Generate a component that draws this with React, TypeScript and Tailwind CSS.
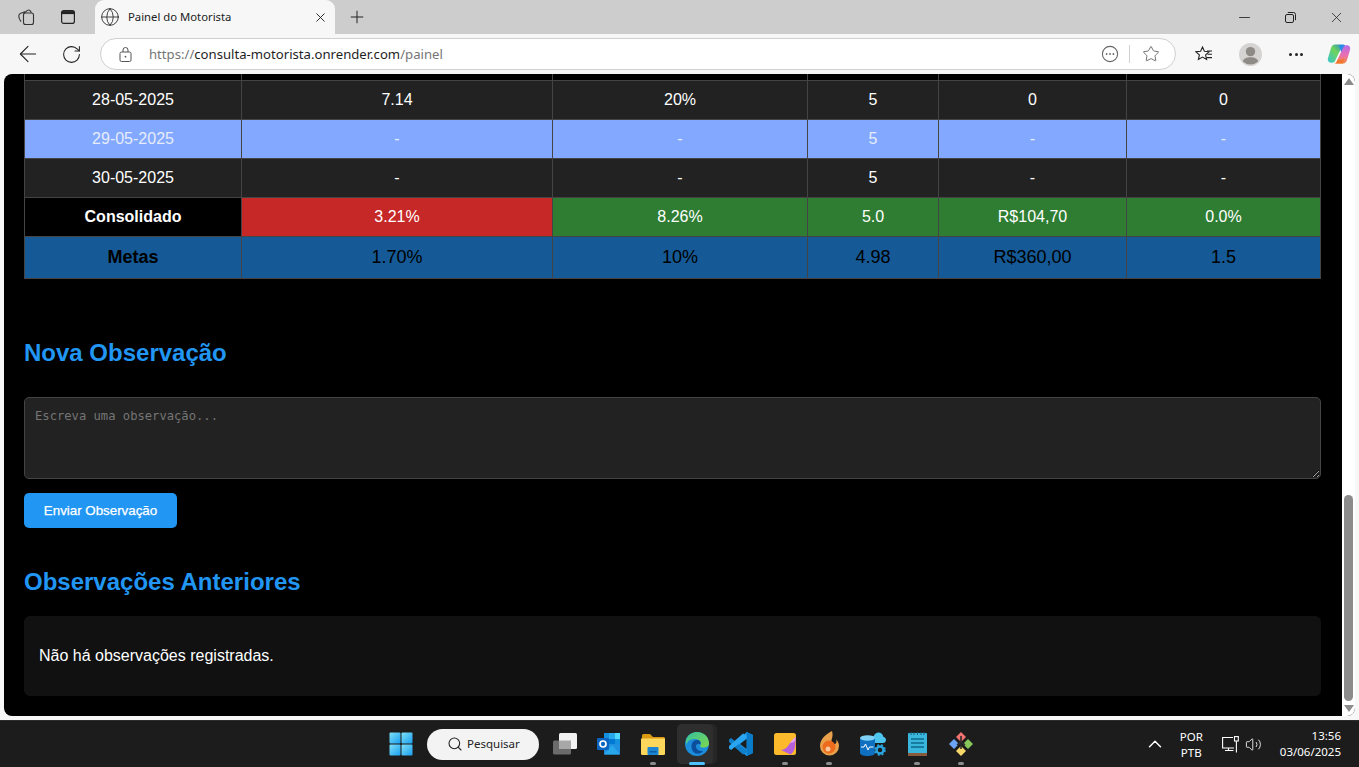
import React from 'react';
import { ArrowLeft, RotateCw, Plus, X, Minus, Globe, Star, Search, ChevronUp, Volume2 } from 'lucide-react';

const rows = [
  { date: '28-05-2025', cells: ['7.14', '20%', '5', '0', '0'], highlight: false },
  { date: '29-05-2025', cells: ['-', '-', '5', '-', '-'], highlight: true },
  { date: '30-05-2025', cells: ['-', '-', '5', '-', '-'], highlight: false },
];

const consolidado = [
  { value: '3.21%', bg: 'bg-[#c62828]' },
  { value: '8.26%', bg: 'bg-[#2e7d32]' },
  { value: '5.0', bg: 'bg-[#2e7d32]' },
  { value: 'R$104,70', bg: 'bg-[#2e7d32]' },
  { value: '0.0%', bg: 'bg-[#2e7d32]' },
];

const metas = ['1.70%', '10%', '4.98', 'R$360,00', '1.5'];

const WorkspacesIcon = () => (
  <svg width="18" height="18" viewBox="0 0 18 18" fill="none" stroke="#333" strokeWidth="1.1">
    <rect x="6.5" y="5" width="10" height="11.5" rx="2" />
    <path d="M4.2 13.5 3.6 13c-1.4-1.8-2-4-1.8-5.5.2-1.3 1-2 2-2.3L8 3.8" />
    <path d="M6.5 5.5 10.5 2.4c.8-.5 1.7-.5 2.4 0l1.6 2.4" />
  </svg>
);

const TabsIcon = () => (
  <svg width="16" height="16" viewBox="0 0 16 16" fill="none" stroke="#222" strokeWidth="1.2">
    <rect x="1.6" y="1.6" width="12.8" height="12.8" rx="2.2" />
    <path d="M1.6 3.6h12.8" strokeWidth="3" />
  </svg>
);

const RestoreIcon = () => (
  <svg width="11" height="11" viewBox="0 0 11 11" fill="none" stroke="#222" strokeWidth="1">
    <rect x="0.5" y="2.5" width="8" height="8" rx="1.5" />
    <path d="M2.8 0.5h5.7a2 2 0 0 1 2 2v5.7" />
  </svg>
);

const LockIcon = () => (
  <svg width="13" height="15" viewBox="0 0 13 15" fill="none" stroke="#555" strokeWidth="1">
    <rect x="1" y="5" width="11" height="9.5" rx="1.5" />
    <path d="M4 5V3a2.500 2.500 0 0 1 5 0v2" />
    <circle cx="6.500" cy="9.700" r="0.900" fill="#555" stroke="none" />
  </svg>
);

const PageInfoIcon = () => (
  <svg width="18" height="18" viewBox="0 0 18 18" fill="none" stroke="#666" strokeWidth="1.1">
    <circle cx="9" cy="9" r="7.6" />
    <circle cx="5.6" cy="9" r="0.9" fill="#666" stroke="none" />
    <circle cx="9" cy="9" r="0.9" fill="#666" stroke="none" />
    <circle cx="12.4" cy="9" r="0.9" fill="#666" stroke="none" />
  </svg>
);

const FavoritesIcon = () => (
  <svg width="18" height="18" viewBox="0 0 18 18" fill="none" stroke="#222" strokeWidth="1.1">
    <path d="M7.500 2l1.900 4.300 4.600.5-3.400 3.100 1 4.600-4.100-2.400-4.100 2.400 1-4.600L1 6.800l4.600-.5z" />
    <path d="M12 6h5M12.500 9.300h4.500M11.800 12.600h5.200" />
  </svg>
);

const Avatar = () => (
  <svg width="23" height="23" viewBox="0 0 23 23">
    <circle cx="11.5" cy="11.5" r="11.5" fill="#d6d4d2" />
    <circle cx="11.5" cy="8.6" r="4.7" fill="#8e8a86" />
    <path d="M3.8 18.5c1-3.2 3.8-4.2 7.7-4.2s6.7 1 7.7 4.2a11.5 11.5 0 0 1-15.4 0z" fill="#8e8a86" />
  </svg>
);

const CopilotLogo = () => (
  <svg width="24" height="24" viewBox="0 0 24 24">
    <defs>
      <linearGradient id="cpA" x1="0" y1="1" x2="1" y2="0">
        <stop offset="0" stopColor="#37c6d0" />
        <stop offset="0.55" stopColor="#6fd35a" />
        <stop offset="1" stopColor="#1b7fe0" />
      </linearGradient>
      <linearGradient id="cpB" x1="0.500" y1="0" x2="0.500" y2="1">
        <stop offset="0" stopColor="#b66be8" />
        <stop offset="0.55" stopColor="#ea6fb0" />
        <stop offset="1" stopColor="#f58a3c" />
      </linearGradient>
    </defs>
    <path d="M8 2.500h9.500c-1.800.500-3 1.500-3.800 4.500L8.500 18c-.5 1.800-1.800 2.700-3.500 2.700H4c-2.500 0-3.700-2.200-3-4.700L4 6c.5-1.800 2-3.500 4-3.500z" fill="url(#cpA)" />
    <path d="M12 3h6l1 6-5 1z" fill="#2b8be8" />
    <path d="M16 21.500H7c1.800-.5 3-1.500 3.800-4.500L16 6c.5-1.800 1.800-2.700 3.500-2.700h.5c2.500 0 3.700 2.200 3 4.700l-3 10c-.5 1.800-2 3.500-4 3.500z" fill="url(#cpB)" />
    <path d="M10.500 17.500c1 .5 4 .5 6.500-1l-1 5h-7z" fill="#f2762e" />
  </svg>
);

const StartIcon = () => (
  <svg width="24" height="24" viewBox="0 0 24 24">
    <defs>
      <linearGradient id="win" x1="0" y1="0" x2="1" y2="1">
        <stop offset="0" stopColor="#7fe0f7" />
        <stop offset="1" stopColor="#1a9ff0" />
      </linearGradient>
    </defs>
    <rect x="0.500" y="0.500" width="11" height="11" rx="1" fill="url(#win)" />
    <rect x="12.500" y="0.500" width="11" height="11" rx="1" fill="url(#win)" />
    <rect x="0.500" y="12.500" width="11" height="11" rx="1" fill="url(#win)" />
    <rect x="12.500" y="12.500" width="11" height="11" rx="1" fill="url(#win)" />
  </svg>
);

const TaskViewIcon = () => (
  <svg width="24" height="22" viewBox="0 0 24 22">
    <rect x="0" y="7.500" width="18" height="14" rx="1.500" fill="#6b6b6b" />
    <rect x="6" y="0" width="18" height="16" rx="1.500" fill="#f2f2f2" />
    <rect x="6" y="7.500" width="12" height="8.500" fill="#a8a8a8" />
  </svg>
);

const OutlookIcon = () => (
  <svg width="24" height="24" viewBox="0 0 24 24">
    <rect x="7" y="1" width="16" height="12" fill="#1490df" />
    <rect x="12" y="1" width="6" height="6" fill="#28a8ea" />
    <rect x="18" y="1" width="5" height="6" fill="#50d9ff" />
    <rect x="12" y="7" width="6" height="6" fill="#0078d4" />
    <path d="M7 12 23 12v9.500a1 1 0 0 1-1 1H8a1 1 0 0 1-1-1z" fill="#1f90e0" />
    <path d="M7 22.500 15 13l8 9.500z" fill="#28a8ea" />
    <rect x="0" y="6" width="12" height="12" rx="1" fill="#0a64c0" />
    <circle cx="6" cy="12" r="3" fill="none" stroke="#fff" strokeWidth="1.700" />
  </svg>
);

const FolderIcon = () => (
  <svg width="24" height="22" viewBox="0 0 24 22">
    <path d="M1 2.500A1.500 1.500 0 0 1 2.500 1H9l3 3h10.500A1.500 1.500 0 0 1 24 5.500V8H1z" fill="#d99a12" />
    <path d="M0 5.500h24V20.500a1.500 1.500 0 0 1-1.500 1.500h-21A1.500 1.500 0 0 1 0 20.500z" fill="#fdd65c" />
    <rect x="6.500" y="14" width="11" height="8" rx="1" fill="#1a86d4" />
    <rect x="8.500" y="18" width="7" height="1.500" fill="#0f5fa0" />
  </svg>
);

const EdgeIcon = () => (
  <svg width="24" height="24" viewBox="0 0 24 24">
    <defs>
      <linearGradient id="edgeA" x1="0" y1="0" x2="1" y2="1">
        <stop offset="0" stopColor="#35c1a0" />
        <stop offset="1" stopColor="#7fd94a" />
      </linearGradient>
    </defs>
    <circle cx="12" cy="12" r="12" fill="#1b8ddb" />
    <path d="M1 8C3 2 8 0 12 0c7 0 12 5 12 11.500 0 2.500-2.500 4-5.500 4-2 0-3.500-.5-3.500-1.500 2-2.500 0-7-5-7C6 7 2.500 8.500 1 13z" fill="url(#edgeA)" />
    <path d="M6.500 14c0-3.500 2.500-6 5.500-6s4 2 3.500 4.500c-2-1.500-4.500-.5-4.500 2s3 5 7 4.500c-2 3-7 4-10 .5-1-1.500-1.500-3.500-1.500-5.500z" fill="#0c4e9c" />
  </svg>
);

const VsCodeIcon = () => (
  <svg width="24" height="24" viewBox="0 0 24 24">
    <path d="M17.500 0 24 3v18l-6.500 3L6 13.500z" fill="#1f9cf0" />
    <path d="M17.500 0 17.500 24 24 21V3z" fill="#0a7bc8" />
    <path d="M0 7.500 2 6l15.500 12v2.500L14 22.500 0 10z" fill="#0f7fcb" />
    <path d="M0 16.500 2 18 17.500 6V3.500L14 1.500 0 14z" fill="#2aa5f2" />
    <path d="M17.500 7 11 12l6.500 5z" fill="#1c1c1c" />
  </svg>
);

const NotesIcon = () => (
  <svg width="22" height="22" viewBox="0 0 22 22">
    <rect x="0" y="0" width="22" height="22" rx="2.500" fill="#fcb92b" />
    <path d="M22 4 21 14c-.3 3-2 5.500-4.500 7.500L7 17c3-.5 6-1.500 9-7z" fill="#b55fdc" />
    <path d="M16 10c2-3 4-5 6-6-.5 3-1.500 6-6 6z" fill="#e3a6f0" />
  </svg>
);

const FlameIcon = () => (
  <svg width="22" height="26" viewBox="0 0 22 26">
    <path d="M14 0c-6 3-12 8-12 15a9.500 9.500 0 0 0 19 0c0-2.500-1-5-3-6.500 1 2 .5 4-1 4.500-2 .5-4-1-3.500-4C14.700 6 15 3 14 0z" fill="#e8a04a" />
    <circle cx="11" cy="16" r="6.500" fill="#ee6a1c" />
    <circle cx="10" cy="18" r="2.500" fill="#f9c79a" />
  </svg>
);

const AzureDataIcon = () => (
  <svg width="26" height="24" viewBox="0 0 26 24">
    <path d="M9 8a4.500 4.500 0 0 1 4.500-3.500C14.500 2 16.500 0.500 18.500 0.500c2.500 0 4.500 1.800 4.800 4.200C25 5.200 26 6.500 26 8c0 1.800-1.500 3-3 3H9z" fill="#4cc4ee" />
    <path d="M0 6h15v15c0 1.700-3.400 3-7.500 3S0 22.700 0 21z" fill="#0f6fc0" />
    <ellipse cx="7.500" cy="6" rx="7.500" ry="2.800" fill="#7fd0f5" />
    <path d="M1 15h3l1.500-3 2.500 6 1.500-3h4" fill="none" stroke="#fff" strokeWidth="1" />
    <circle cx="20" cy="18" r="5.500" fill="#1c1c1c" />
    <circle cx="20" cy="18" r="3.500" fill="none" stroke="#2aa5e0" strokeWidth="2.500" />
    <circle cx="20" cy="18" r="5" fill="none" stroke="#2aa5e0" strokeWidth="1.500" strokeDasharray="2 2" />
  </svg>
);

const NotebookIcon = () => (
  <svg width="19" height="24" viewBox="0 0 19 24">
    <rect x="0" y="1" width="19" height="22" rx="1" fill="#3ab5dc" />
    <rect x="0" y="21" width="19" height="3" fill="#8a5a3c" />
    <path d="M3 0v3M6 0v3M9.500 0v3M13 0v3M16 0v3" stroke="#10607e" strokeWidth="1" />
    <path d="M3 7h13M3 11h13M3 15h13" stroke="#0d6b8c" strokeWidth="1.500" />
  </svg>
);

const GitKrakenIcon = () => (
  <svg width="24" height="24" viewBox="0 0 24 24">
    <path d="M7 5 12 0l5 5-5 5z" fill="#f0736f" />
    <path d="M0 12l5-5 5 5-5 5z" fill="#6ca5f5" />
    <path d="M14 12l5-5 5 5-5 5z" fill="#86c65a" />
    <path d="M7 19l5-5 5 5-5 5z" fill="#f5d76a" />
    <path d="M12 4v13M12 10l-4 3M12 10l4 3" stroke="#2a2a2a" strokeWidth="1.600" />
  </svg>
);

const NetworkIcon = () => (
  <svg width="17" height="17" viewBox="0 0 17 17" fill="none" stroke="#fff" strokeWidth="1.100">
    <path d="M11 1.500H0.600v10.500H12" />
    <path d="M6.500 12v2.500M3 14.500h8.500" />
    <rect x="12.500" y="0.600" width="3.800" height="4.400" />
    <path d="M14.400 5v11.500" />
  </svg>
);

const taskbarApps = [
  { icon: <OutlookIcon />, dot: false },
  { icon: <FolderIcon />, dot: true },
];

const taskbarAppsRight = [
  { icon: <VsCodeIcon />, dot: false },
  { icon: <NotesIcon />, dot: true },
  { icon: <FlameIcon />, dot: true },
  { icon: <AzureDataIcon />, dot: false },
  { icon: <NotebookIcon />, dot: true },
  { icon: <GitKrakenIcon />, dot: true },
];

const TaskbarSlot = ({ icon, dot }: { icon: React.ReactNode; dot: boolean }) => (
  <div className="relative flex h-[40px] w-[44px] items-center justify-center">
    {icon}
    {dot && <span className="absolute bottom-[-1px] h-[3px] w-[6px] rounded-full bg-[#8c8c8c]" />}
  </div>
);

const cellClass = 'border border-[#444] text-center align-middle';
const clippedCell = 'h-[6px] border-x border-[#444] bg-black p-0';

export default function App() {
  return (
    <div className="flex h-screen w-full flex-col overflow-hidden bg-[#f7f7f7] font-['Liberation_Sans',sans-serif]">
      {/* tab strip */}
      <div className="flex h-[34px] shrink-0 items-end bg-[#cdcdcd]">
        <div className="flex h-[34px] w-[95px] items-center gap-[25px] pl-[17px]">
          <WorkspacesIcon />
          <TabsIcon />
        </div>
        <div className="flex h-[34px] w-[240px] items-center rounded-t-[9px] bg-[#f7f7f7] pl-[5px] pr-[7px]">
          <Globe size={20} strokeWidth={1.1} className="text-[#333]" />
          <span className="ml-[8px] flex-1 font-['Noto_Sans',sans-serif] text-[11.3px] text-[#222]">Painel do Motorista</span>
          <X size={15} strokeWidth={1.5} className="text-[#222]" />
        </div>
        <div className="flex h-[34px] items-center pl-[12px]">
          <Plus size={20} strokeWidth={1.2} className="text-[#222]" />
        </div>
        <div className="ml-auto flex h-[34px] items-center text-[#222]">
          <div className="flex w-[46px] justify-center"><Minus size={17} strokeWidth={1.2} /></div>
          <div className="flex w-[46px] justify-center"><RestoreIcon /></div>
          <div className="flex w-[46px] justify-center"><X size={17} strokeWidth={1.1} /></div>
        </div>
      </div>

      {/* address bar */}
      <div className="flex h-[40px] shrink-0 items-center bg-[#f7f7f7]">
        <div className="flex w-[100px] items-center gap-[20px] pl-[15px]">
          <ArrowLeft size={26} strokeWidth={1} className="text-[#222]" />
          <RotateCw size={21} strokeWidth={1.2} className="text-[#222]" />
        </div>
        <div className="flex h-[32px] w-[1076px] items-center rounded-full border border-[#d0d0d0] bg-white pl-[18px] pr-[15px]">
          <LockIcon />
          <span className="ml-[17px] flex-1 pt-[2px] font-['Noto_Sans',sans-serif] text-[13.15px] text-[#767676]">
            https://<span className="text-[#1f1f1f]">consulta-motorista.onrender.com</span>/painel
          </span>
          <PageInfoIcon />
          <div className="ml-[10px] mr-[12px] h-[18px] w-px bg-[#d0d0d0]" />
          <Star size={18} strokeWidth={1.1} className="text-[#555]" />
        </div>
        <div className="flex flex-1 items-center pl-[19px]">
          <FavoritesIcon />
          <div className="ml-[26px]"><Avatar /></div>
          <div className="ml-[27px] flex w-[14px] justify-between">
            <span className="h-[3px] w-[3px] rounded-full bg-[#222]" />
            <span className="h-[3px] w-[3px] rounded-full bg-[#222]" />
            <span className="h-[3px] w-[3px] rounded-full bg-[#222]" />
          </div>
          <div className="ml-[24px]"><CopilotLogo /></div>
        </div>
      </div>

      {/* page */}
      <div className="mx-[4px] flex h-[642px] shrink-0 overflow-hidden rounded-[8px] bg-black">
        <div className="flex min-w-0 flex-1 flex-col px-[20px] text-white">
          <table className="w-[1297px] table-fixed border-collapse text-[16px] text-white">
            <colgroup>
              <col className="w-[217px]" />
              <col className="w-[311px]" />
              <col className="w-[255px]" />
              <col className="w-[131px]" />
              <col className="w-[188px]" />
              <col className="w-[194px]" />
            </colgroup>
            <tbody>
              {/* row scrolled out of view above */}
              <tr className="h-[6px]">
                <td className={clippedCell} />
                <td className={clippedCell} />
                <td className={clippedCell} />
                <td className={clippedCell} />
                <td className={clippedCell} />
                <td className={clippedCell} />
              </tr>
              {rows.map((r) => (
                <tr key={r.date} className={r.highlight ? 'h-[39px] bg-[#82a9ff] text-[#e6ecfa]' : 'h-[39px] bg-[#222]'}>
                  <td className={cellClass}>{r.date}</td>
                  {r.cells.map((c, i) => (
                    <td key={i} className={cellClass}>{c}</td>
                  ))}
                </tr>
              ))}
              <tr className="h-[39px]">
                <td className={`${cellClass} bg-black font-bold`}>Consolidado</td>
                {consolidado.map((c, i) => (
                  <td key={i} className={`${cellClass} ${c.bg}`}>{c.value}</td>
                ))}
              </tr>
              <tr className="h-[42px] bg-[#155a96] text-[18px] text-black">
                <td className={`${cellClass} font-bold`}>Metas</td>
                {metas.map((m, i) => (
                  <td key={i} className={cellClass}>{m}</td>
                ))}
              </tr>
            </tbody>
          </table>

          <h2 className="mt-[60px] text-[24px] font-bold leading-[28px] text-[#2196f3]">Nova Observação</h2>
          <textarea
            placeholder="Escreva uma observação..."
            className="mt-[30px] h-[82px] w-[1297px] shrink-0 rounded-[5px] border border-[#444] bg-[#222] px-[10px] py-[11px] font-['DejaVu_Sans_Mono',monospace] text-[12.17px] leading-[15px] text-white placeholder:text-[#757575]"
          />
          <button className="mt-[14px] h-[35px] w-[153px] rounded-[5px] bg-[#2196f3] pt-[1px] text-[13.33px] font-medium text-white [-webkit-text-stroke:0.25px_white]">
            Enviar Observação
          </button>
          <h2 className="mt-[40px] text-[24px] font-bold leading-[28px] text-[#2196f3]">Observações Anteriores</h2>
          <div className="mt-[20px] flex h-[80px] w-[1297px] shrink-0 items-center rounded-[6px] bg-[#111] pl-[15px] text-[16px] text-white">
            Não há observações registradas.
          </div>
        </div>
        {/* scrollbar */}
        <div className="flex w-[13px] shrink-0 flex-col items-center justify-between bg-white py-[4px]">
          <span className="h-0 w-0 border-x-[5px] border-b-[7px] border-x-transparent border-b-[#8b8b8b]" />
          <div className="mb-[4px] mt-[410px] w-[9px] flex-1 rounded-full bg-[#8b8b8b]" />
          <span className="h-0 w-0 border-x-[5px] border-t-[7px] border-x-transparent border-t-[#8b8b8b]" />
        </div>
      </div>

      <div className="h-[4px] shrink-0 bg-[#f7f7f7]" />

      {/* taskbar */}
      <div className="relative flex h-[47px] shrink-0 items-center border-t border-[#2c2c2c] bg-[#1c1c1c] text-white">
        <div className="absolute left-[379px] top-[3px] flex items-center">
          <div className="flex h-[40px] w-[44px] items-center justify-center"><StartIcon /></div>
          <div className="ml-[4px] flex h-[31px] w-[112px] items-center rounded-full bg-[#f3f3f3] pl-[20px] font-['Noto_Sans',sans-serif] text-[11.5px] text-[#222]">
            <Search size={16} strokeWidth={1.6} className="mr-[4px] text-[#222]" />
            Pesquisar
          </div>
          <div className="ml-[4px] flex h-[40px] w-[44px] items-center justify-center"><TaskViewIcon /></div>
          {taskbarApps.map((a, i) => (
            <TaskbarSlot key={i} icon={a.icon} dot={a.dot} />
          ))}
          <div className="relative ml-[2px] flex h-[40px] w-[40px] items-center justify-center rounded-[5px] bg-[#262626]">
            <span className="absolute inset-y-0 left-0 w-[36px] rounded-[5px] bg-[#2e2e2e]" />
            <span className="relative flex"><EdgeIcon /></span>
            <span className="absolute bottom-[-1px] h-[3px] w-[16px] rounded-full bg-[#4cc2ff]" />
          </div>
          <div className="w-[2px]" />
          {taskbarAppsRight.map((a, i) => (
            <TaskbarSlot key={i} icon={a.icon} dot={a.dot} />
          ))}
        </div>
        <div className="ml-auto flex items-center font-['Noto_Sans',sans-serif] text-[11.5px]">
          <ChevronUp size={22} strokeWidth={1.6} className="mr-[14px]" />
          <div className="mr-[19px] flex flex-col items-center pt-[2px] leading-[16px]">
            <span>POR</span>
            <span>PTB</span>
          </div>
          <NetworkIcon />
          <Volume2 size={17} strokeWidth={1.2} className="ml-[6px] mr-[18px]" />
          <div className="mr-[18px] flex flex-col items-end leading-[16px]">
            <span>13:56</span>
            <span>03/06/2025</span>
          </div>
        </div>
      </div>
    </div>
  );
}
